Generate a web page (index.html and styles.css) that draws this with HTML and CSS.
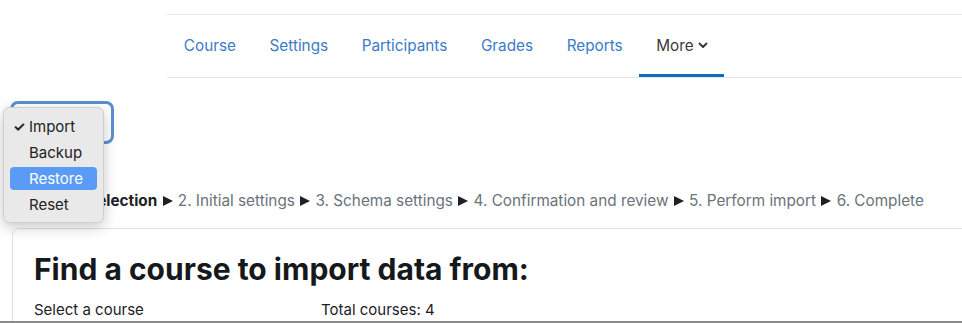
FILE: index.html
```html
<!DOCTYPE html>
<html lang="en">

<head>
    <meta charset="UTF-8">
    <meta name="viewport" content="width=device-width, initial-scale=1.0">
    <title>Import</title>
    <link rel="stylesheet" href="styles.css">
</head>

<body>
    <div class="page">
        <nav class="secondary-nav">
            <a href="#" class="nav-item">Course</a>
            <a href="#" class="nav-item">Settings</a>
            <a href="#" class="nav-item">Participants</a>
            <a href="#" class="nav-item">Grades</a>
            <a href="#" class="nav-item">Reports</a>
            <a href="#" class="nav-item active">More
                <svg class="chevron" width="10" height="7" viewBox="0 0 10 7">
                    <path d="M1.5 1.5 L5 5 L8.5 1.5" fill="none" stroke="#333" stroke-width="1.8" stroke-linecap="round" stroke-linejoin="round"/>
                </svg>
            </a>
        </nav>

        <section class="action-bar">
            <div class="select-box"></div>
            <!-- open native dropdown -->
            <ul class="select-menu">
                <li class="option checked"><span class="tick">✓</span>Import</li>
                <li class="option">Backup</li>
                <li class="option hover">Restore</li>
                <li class="option">Reset</li>
            </ul>
        </section>

        <div class="steps">
            <span class="step current">1. Course selection</span>
            <span class="sep"></span>
            <span class="step">2. Initial settings</span>
            <span class="sep"></span>
            <span class="step">3. Schema settings</span>
            <span class="sep"></span>
            <span class="step">4. Confirmation and review</span>
            <span class="sep"></span>
            <span class="step">5. Perform import</span>
            <span class="sep"></span>
            <span class="step">6. Complete</span>
        </div>

        <section class="card">
            <h2 class="card-title">Find a course to import data from:</h2>
            <div class="card-row">
                <span class="col-label">Select a course</span>
                <span class="col-total">Total courses: 4</span>
            </div>
        </section>
    </div>
</body>

</html>
```

FILE: styles.css
```css
body {
    margin: 0;
    background-color: #fff;
    font-family: Inter, "Liberation Sans", sans-serif;
    color: #1d2125;
    overflow: hidden;
}

.page {
    height: 321px;
    border-bottom: 2px solid #8a8a8a;
    overflow: hidden;
}

.secondary-nav {
    margin-left: 167px;
    margin-top: 14px;
    height: 62px;
    display: flex;
    border-top: 1px solid #e3e7ea;
    border-bottom: 1px solid #e3e7ea;
}

.nav-item {
    display: flex;
    align-items: center;
    padding: 0 16.8px;
    padding-top: 1px;
    font-size: 15.3px;
    color: #3b7bc8;
    text-decoration: none;
    border-bottom: 3px solid transparent;
}

.nav-item.active {
    color: #3a3a3a;
    border-bottom-color: #0f6cbf;
}

.chevron {
    margin-left: 4px;
    margin-top: 1px;
}

.action-bar {
    position: relative;
    height: 112px;
    padding-top: 23px;
    box-sizing: border-box;
}

.select-box {
    margin-left: 10px;
    width: 104px;
    height: 43px;
    box-sizing: border-box;
    border: 3px solid #5b8fd3;
    border-radius: 8px;
}

.select-menu {
    position: absolute;
    left: 3px;
    top: 29px;
    width: 101px;
    height: 116px;
    box-sizing: border-box;
    margin: 0;
    padding: 7px 6px;
    list-style: none;
    background-color: #e9e9e9;
    border: 1px solid #d0d0d0;
    border-radius: 6px;
    box-shadow: 0 4px 14px rgba(0, 0, 0, 0.22);
    font-size: 15px;
    color: #222;
    z-index: 2;
}

.option {
    position: relative;
    height: 23px;
    line-height: 23px;
    margin-bottom: 3px;
    padding-left: 19px;
    border-radius: 4px;
}

.option.hover {
    background-color: #5a9bf5;
    color: #fff;
}

.tick {
    position: absolute;
    left: 3px;
    top: 0;
    font-size: 14px;
    font-weight: 700;
}

.steps {
    padding-left: 16px;
    height: 38px;
    line-height: 22px;
    font-size: 15.3px;
    color: #6a737b;
    white-space: nowrap;
}

.step.current {
    color: #1d2125;
    font-weight: 700;
}

.sep {
    display: inline-block;
    width: 0;
    height: 0;
    margin: 0 1px;
    border-top: 5px solid transparent;
    border-bottom: 5px solid transparent;
    border-left: 10px solid #1d2125;
}

.card {
    margin-left: 12px;
    margin-right: -20px;
    border: 1px solid #dee2e6;
    border-radius: 7px;
    padding: 22px 21px 0;
    height: 120px;
}

.card-title {
    margin: 0 0 13px;
    font-size: 30px;
    font-weight: 700;
    color: #16191c;
}

.card-row {
    display: flex;
    font-size: 15px;
    color: #1d2125;
}

.col-label {
    width: 287px;
}
```
